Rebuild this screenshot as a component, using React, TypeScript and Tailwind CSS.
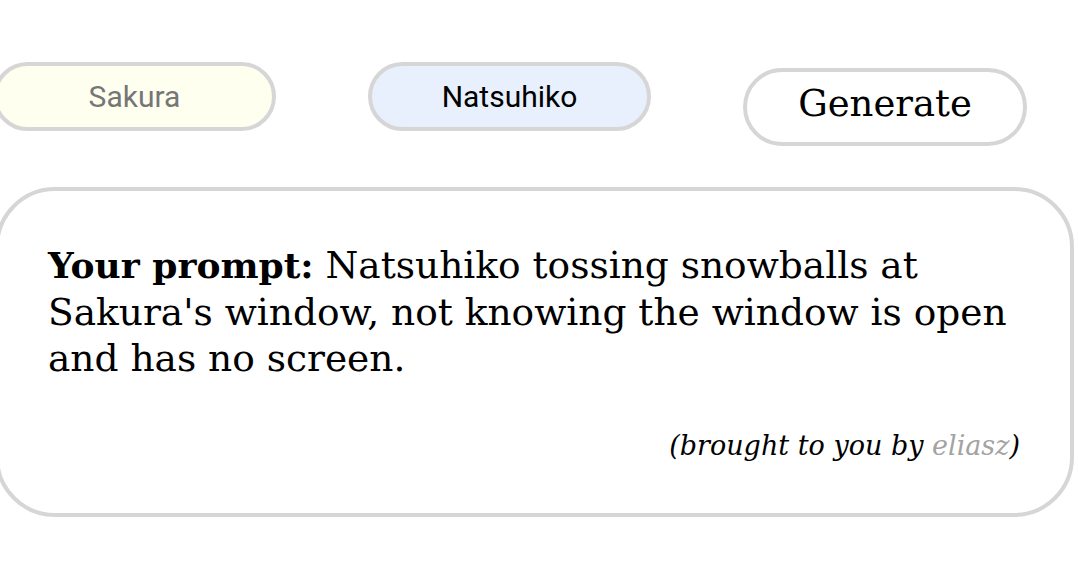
export default function App() {
  return (
    <div className="w-[1078px] h-[576px] overflow-hidden bg-white">
      <div className="flex items-start gap-[92px] pt-[62px] -ml-[7px]">
        <button className="h-[69px] w-[283px] rounded-full border-4 border-[#d6d6d6] bg-[#fffff0] text-[30px] text-[#767676] font-['Roboto',sans-serif]">
          Sakura
        </button>
        <button className="h-[69px] w-[283px] rounded-full border-4 border-[#d6d6d6] bg-[#e8f0fd] text-[30px] text-black font-['Roboto',sans-serif]">
          Natsuhiko
        </button>
        <button className="mt-[6px] h-[78px] w-[284px] rounded-full border-4 border-[#d6d6d6] bg-white pb-[6px] text-[37px] text-black font-['DejaVu_Serif',serif]">
          Generate
        </button>
      </div>

      <div className="mt-[41px] -ml-[5px] w-[1079px] rounded-[60px] border-4 border-[#d6d6d6] pt-[51px] pb-[48px] pl-[49px] pr-[30px] font-['DejaVu_Serif',serif] text-black">
        <p className="text-[37.5px] leading-[46.5px]">
          <b className="text-[36px]">Your prompt:</b> Natsuhiko tossing snowballs at Sakura's window, not knowing the window is open and has no screen.
        </p>
        <p className="mt-[44px] mr-[20px] text-right text-[27px] italic leading-[39px]">
          (brought to you by <span className="text-[#a3a3a3]">eliasz</span>)
        </p>
      </div>
    </div>
  );
}
